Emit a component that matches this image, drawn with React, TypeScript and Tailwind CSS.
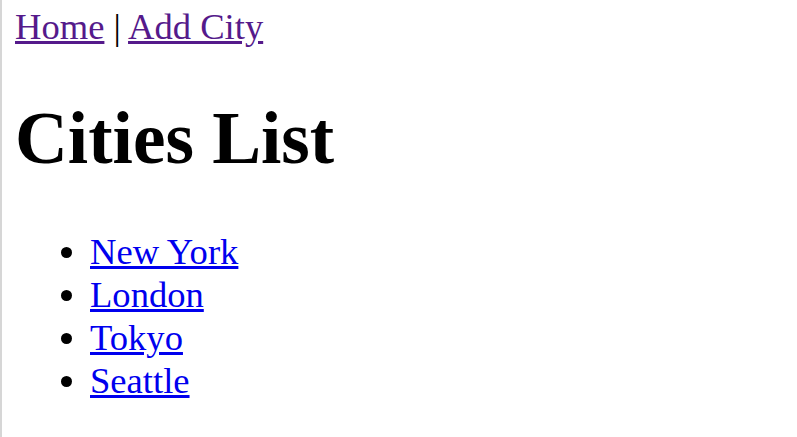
const cities = ["New York", "London", "Tokyo", "Seattle"];

export default function App() {
  return (
    <div className="min-h-screen bg-white border-l-2 border-[#d6d6d6] pl-[13px] pt-[6px] font-['Liberation_Serif','Times_New_Roman',serif] text-black text-[36.6px] leading-[42px]">
      <nav>
        <a href="#" className="text-[#551a8b] underline">
          Home
        </a>{" "}
        |{" "}
        <a href="#" className="text-[#551a8b] underline">
          Add City
        </a>
      </nav>

      <h1 className="text-[73.2px] font-bold leading-[84px] mt-[49px] mb-[49px]">
        Cities List
      </h1>

      <ul className="list-disc pl-[75px] leading-[43px]">
        {cities.map((city) => (
          <li key={city}>
            <a href="#" className="text-[#0000ee] underline">
              {city}
            </a>
          </li>
        ))}
      </ul>
    </div>
  );
}
